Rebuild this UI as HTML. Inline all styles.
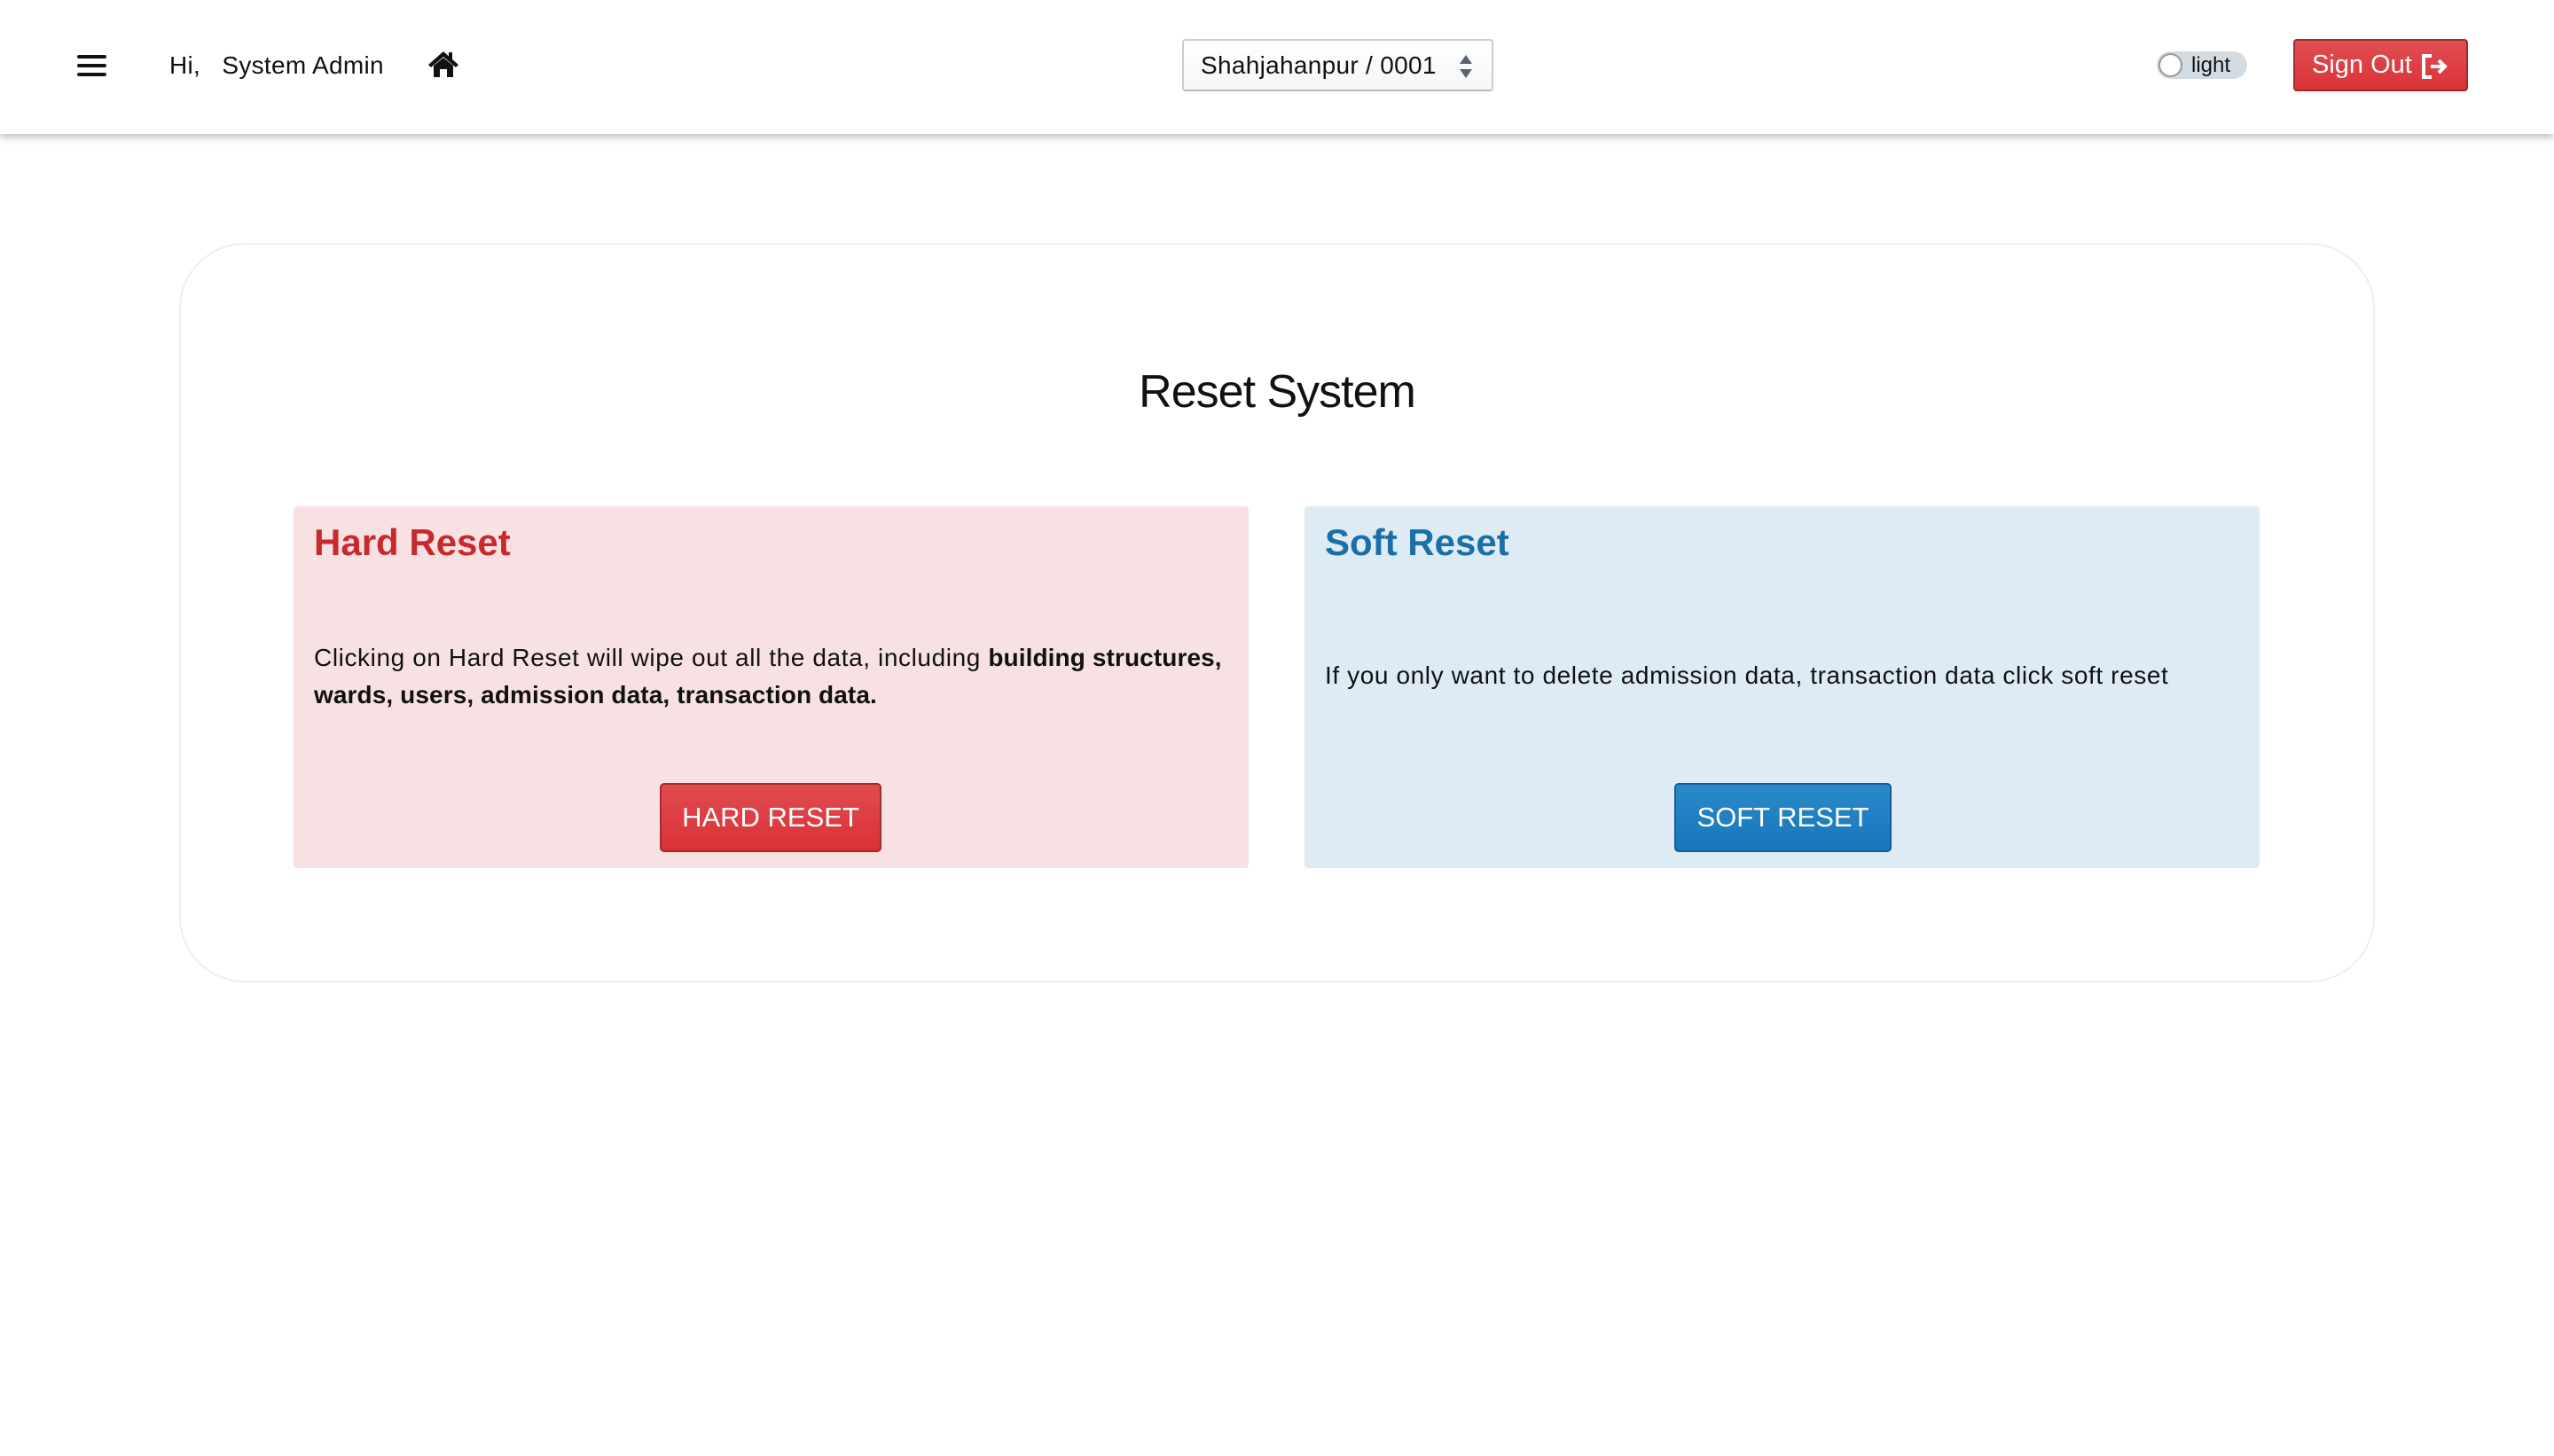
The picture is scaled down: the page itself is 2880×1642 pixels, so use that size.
<!DOCTYPE html>
<html><head><meta charset="utf-8"><style>
*{box-sizing:border-box;margin:0;padding:0}
body{width:2880px;height:1642px;background:#fff;font-family:"Liberation Sans",sans-serif;color:#111;position:relative;overflow:hidden}
.hdr{position:absolute;left:0;top:0;width:2880px;height:151px;background:#fff;box-shadow:0 4px 8px rgba(0,0,0,.25)}
.abs{position:absolute}
.txt{font-size:28px;line-height:34px;letter-spacing:0.3px}
.sel{left:1333px;top:44px;width:351px;height:59px;border:2px solid #ccc;border-bottom-color:#b8bcc0;border-radius:4px;background:linear-gradient(#fff,#f4f6f8);font-size:28px;line-height:55px;padding-left:19px;letter-spacing:0.3px}
.tog{left:2432px;top:58px;width:102px;height:31px;border-radius:16px;background:#d3dce2}
.knob{position:absolute;left:2px;top:2px;width:27px;height:27px;border-radius:50%;background:#fff;border:2px solid #999}
.so{left:2586px;top:44px;width:197px;height:59px;border-radius:4px;background:linear-gradient(#e14d52,#d93337);border:2px solid #a52a2e;color:#fff;font-size:29px;line-height:55px;padding-left:19px}
.outer{left:202px;top:274px;width:2476px;height:834px;border:2px solid #eee;border-radius:74px}
.title{left:0;width:2880px;top:407px;text-align:center;font-size:52px;font-weight:normal;line-height:70px;letter-spacing:-1px}
.card{top:571px;height:408px;width:1077px;border-radius:4px}
.h{font-size:42px;font-weight:bold;left:23px;top:17px;position:absolute}
.p{position:absolute;left:23px;font-size:28px;line-height:42px;letter-spacing:0.6px;white-space:nowrap}
.p b{letter-spacing:0.1px}
.btn{position:absolute;top:312px;height:78px;border-radius:5px;color:#fff;font-size:31px;line-height:74px;text-align:center}
</style></head><body>
<div class="hdr">
 <div class="abs" style="left:87px;top:62px;width:33px;height:4px;background:#111;border-radius:2px"></div>
 <div class="abs" style="left:87px;top:72px;width:33px;height:4px;background:#111;border-radius:2px"></div>
 <div class="abs" style="left:87px;top:82px;width:33px;height:4px;background:#111;border-radius:2px"></div>
 <div class="abs txt" style="left:191px;top:57px">Hi,&nbsp;&nbsp; System Admin</div>
 <svg class="abs" style="left:482px;top:56px" width="36" height="32" viewBox="0 0 36 32"><path d="M18 2 L1 17 L4 20 L18 8 L32 20 L35 17 L28 11 V3 H24 V7.5 Z" fill="#111"/><path d="M7 18 L18 9 L29 18 V31 H22 V22 H14 V31 H7 Z" fill="#111"/></svg>
 <div class="abs sel">Shahjahanpur / 0001<svg style="position:absolute;right:22px;top:16px" width="14" height="26" viewBox="0 0 14 26"><path d="M7 0 L14 10 H0Z M7 26 L14 16 H0Z" fill="#5a6470"/></svg></div>
 <div class="abs tog"><div class="knob"></div><div style="position:absolute;left:39px;top:0;font-size:24px;line-height:31px">light</div></div>
 <div class="abs so">Sign Out<svg style="position:absolute;right:18px;top:14px" width="34" height="30" viewBox="0 0 34 30"><path d="M13 3 H4 V27 H13" fill="none" stroke="#fff" stroke-width="4"/><path d="M12 15 H28 M21 8 L28 15 L21 22" fill="none" stroke="#fff" stroke-width="4"/></svg></div>
</div>
<div class="abs outer"></div>
<div class="abs title">Reset System</div>
<div class="abs card" style="left:331px;background:#f8e1e2">
 <div class="h" style="color:#c8292e">Hard Reset</div>
 <div class="p" style="top:150px">Clicking on Hard Reset will wipe out all the data, including <b>building structures,<br>wards, users, admission data, transaction data.</b></div>
 <div class="btn" style="left:413px;width:250px;background:linear-gradient(#e14b50,#d93236);border:2px solid #a52a2e">HARD RESET</div>
</div>
<div class="abs card" style="left:1471px;background:#dcebf4">
 <div class="h" style="color:#1a6fa8">Soft Reset</div>
 <div class="p" style="top:170px">If you only want to delete admission data, transaction data click soft reset</div>
 <div class="btn" style="left:417px;width:245px;background:linear-gradient(#2a89c8,#1877bb);border:2px solid #135d92">SOFT RESET</div>
</div>
</body></html>
